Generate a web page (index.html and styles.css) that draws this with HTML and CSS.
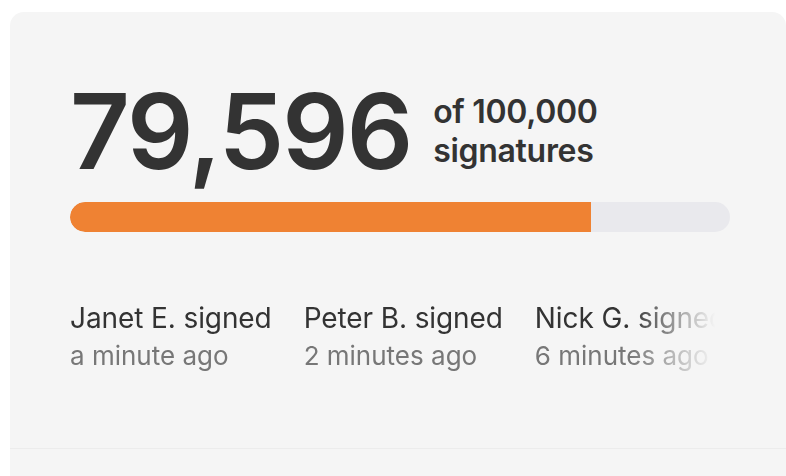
FILE: index.html
```html
<!DOCTYPE html>
<html lang="en">
<head>
<meta charset="utf-8">
<link rel="stylesheet" href="styles.css">
</head>
<body>
<div class="card">
  <section class="main">
    <div class="count-row">
      <div class="count">79,596</div>
      <div class="goal">of 100,000<br>signatures</div>
    </div>
    <div class="bar"><div class="fill" style="width: 78.9%"></div></div>
    <div class="signers">
      <div class="signer"><div class="name">Janet E. signed</div><div class="time">a minute ago</div></div>
      <div class="signer"><div class="name">Peter B. signed</div><div class="time">2 minutes ago</div></div>
      <div class="signer"><div class="name">Nick G. signed</div><div class="time">6 minutes ago</div></div>
    </div>
  </section>
  <div class="footer"></div>
</div>
</body>
</html>
```

FILE: styles.css
```css
* { box-sizing: border-box; }
html, body { margin: 0; padding: 0; background: #ffffff; }
body {
  font-family: Inter, "Noto Sans", "Liberation Sans", sans-serif;
  color: #333333;
  overflow: hidden;
  height: 476px;
}
.card {
  margin: 12px 0 0 10px;
  width: 776px;
  height: 464px;
  background: #f5f5f5;
  border-radius: 14px 14px 0 0;
}
.main {
  padding: 67px 56px 0 60px;
  height: 437px;
  border-bottom: 1px solid #ececec;
}
.count-row {
  display: flex;
  align-items: center;
  gap: 22px;
}
.count {
  font-size: 104px;
  line-height: 104px;
  font-weight: 600;
  letter-spacing: -2px;
  color: #333333;
}
.goal {
  font-size: 32px;
  line-height: 39px;
  font-weight: 600;
  letter-spacing: -0.3px;
  color: #333333;
}
.bar {
  margin-top: 19px;
  height: 30px;
  width: 660px;
  background: #e9e9ed;
  border-radius: 15px;
  overflow: hidden;
}
.fill {
  height: 100%;
  background: #ef8233;
  border-radius: 15px 0 0 15px;
}
.signers {
  margin-top: 69px;
  width: 645px;
  display: flex;
  gap: 32px;
  overflow: hidden;
  white-space: nowrap;
  -webkit-mask-image: linear-gradient(to right, #000 calc(100% - 85px), transparent 100%);
  mask-image: linear-gradient(to right, #000 calc(100% - 85px), transparent 100%);
}
.signer { flex: none; }
.name {
  font-size: 28px;
  line-height: 34px;
  letter-spacing: -0.1px;
  color: #333333;
}
.time {
  margin-top: 4px;
  font-size: 26px;
  line-height: 34px;
  color: #777777;
}
```
